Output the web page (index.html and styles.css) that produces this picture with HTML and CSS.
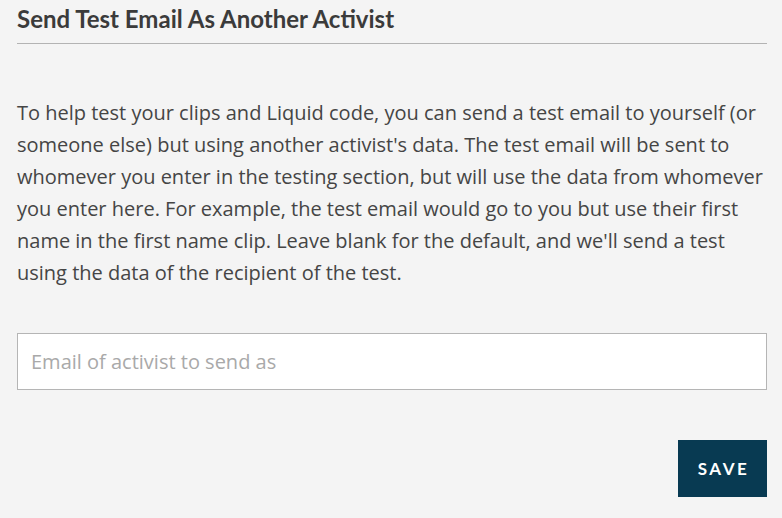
FILE: index.html
```html
<!DOCTYPE html>
<html>
<head>
<meta charset="utf-8">
<link rel="stylesheet" href="styles.css">
</head>
<body>
<div class="panel">
  <h2 class="title">Send Test Email As Another Activist</h2>
  <p class="desc">To help test your clips and Liquid code, you can send a test email to yourself (or someone else) but using another activist's data. The test email will be sent to whomever you enter in the testing section, but will use the data from whomever you enter here. For example, the test email would go to you but use their first name in the first name clip. Leave blank for the default, and we'll send a test using the data of the recipient of the test.</p>
  <input class="field" type="text" placeholder="Email of activist to send as">
  <div class="actions">
    <button class="save" type="button">SAVE</button>
  </div>
</div>
</body>
</html>
```
FILE: styles.css
```css
html, body {
  margin: 0;
  padding: 0;
  background: #f4f4f4;
}
.panel {
  width: 750px;
  margin-left: 17px;
  display: flex;
  flex-direction: column;
}
.title {
  margin: 0;
  font-family: Lato, "Liberation Sans", sans-serif;
  font-weight: 700;
  font-size: 24px;
  line-height: 29px;
  color: #3b3b3b;
  padding-top: 4px;
  padding-bottom: 10px;
  border-bottom: 1px solid #b3b3b3;
}
.desc {
  margin: 53px 0 0 0;
  font-family: "Open Sans", sans-serif;
  font-size: 20px;
  line-height: 32px;
  color: #454545;
}
.field {
  margin-top: 44px;
  box-sizing: border-box;
  width: 750px;
  height: 57px;
  border: 1px solid #b5b5b5;
  background: #fff;
  padding: 0 13px;
  font-family: "Open Sans", sans-serif;
  font-size: 20px;
  color: #444;
  outline: none;
}
.field::placeholder {
  color: #a9a9a9;
}
.actions {
  margin-top: 50px;
  display: flex;
  justify-content: flex-end;
}
.save {
  width: 89px;
  height: 57px;
  border: 0;
  background: #083a52;
  color: #fff;
  font-family: Lato, "Liberation Sans", sans-serif;
  font-weight: 700;
  font-size: 17px;
  letter-spacing: 2.5px;
  padding: 0 0 0 2px;
  cursor: pointer;
}
```
